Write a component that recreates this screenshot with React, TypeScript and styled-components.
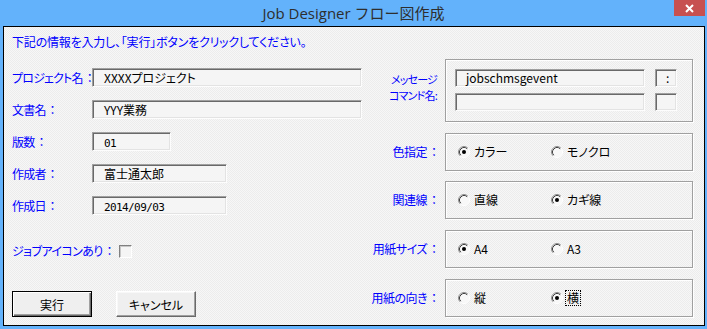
import React from "react";
import styled, { createGlobalStyle } from "styled-components";

const GlobalStyle = createGlobalStyle`
  html, body {
    margin: 0;
    padding: 0;
    background: #63b2fb;
  }
  * {
    box-sizing: border-box;
  }
`;

const UI_FONT = `"Noto Sans CJK JP", "Liberation Sans", sans-serif`;

const Window = styled.div`
  width: 707px;
  height: 329px;
  display: flex;
  flex-direction: column;
  background: #63b2fb;
  font-family: ${UI_FONT};
  font-size: 12px;
  font-feature-settings: "palt";
`;

const TitleBar = styled.div`
  position: relative;
  height: 26px;
  display: flex;
  align-items: center;
  justify-content: center;
  padding-bottom: 2px;
  color: #2e2e2e;
  font-family: "Open Sans", "Noto Sans CJK JP", sans-serif;
  font-size: 15px;
  font-feature-settings: normal;
`;

const CloseButton = styled.div`
  position: absolute;
  top: 0;
  right: 2px;
  width: 31px;
  height: 16px;
  background: #c75050;
  display: flex;
  align-items: center;
  justify-content: center;
`;

const Body = styled.div`
  flex: 1;
  margin: 0 2px 3px 3px;
  border: 1px solid #000;
  padding: 8px 11px 0 8px;
  background: repeating-conic-gradient(#ececec 0% 25%, #f7f7f7 0% 50%) 0 0 / 2px 2px;
`;

const Instruction = styled.div`
  color: #0000ff;
  line-height: 14px;
  height: 14px;
  letter-spacing: -0.2px;
`;

const Main = styled.div`
  display: flex;
  justify-content: space-between;
`;

const LeftColumn = styled.div`
  width: 354px;
  padding-top: 19px;
  display: flex;
  flex-direction: column;
`;

const Fields = styled.div`
  display: flex;
  flex-direction: column;
  gap: 13px;
`;

const FormRow = styled.div`
  display: flex;
  align-items: center;
`;

const Label = styled.div`
  width: 80px;
  color: #0000ff;
  line-height: 19px;
  white-space: nowrap;
  letter-spacing: -0.8px;
`;

const Colon = styled.span`
  margin-left: 4px;
  letter-spacing: 0;
`;

const Field = styled.div<{ $w: number }>`
  width: ${(p) => p.$w}px;
  height: 19px;
  background: #f5f5f5;
  border-top: 1px solid #a0a0a0;
  border-left: 1px solid #a0a0a0;
  border-bottom: 1px solid #fdfdfd;
  border-right: 1px solid #fdfdfd;
  box-shadow: inset 1px 1px #696969, inset -1px -1px #e3e3e3;
  padding-left: 11px;
  line-height: 17px;
  color: #000;
  white-space: nowrap;
  overflow: hidden;
`;

const Digits = styled.span`
  font-family: "DejaVu Sans Mono", "Liberation Mono", monospace;
  font-size: 11px;
  letter-spacing: -0.6px;
`;

const CheckRow = styled.div`
  margin-top: 29px;
  display: flex;
  align-items: center;
  gap: 6px;
`;

const CheckLabel = styled.span`
  color: #0000ff;
  letter-spacing: -0.6px;
  line-height: 14px;
`;

const CheckBox = styled.div`
  width: 13px;
  height: 13px;
  background: #f5f5f5;
  border-top: 1px solid #808080;
  border-left: 1px solid #808080;
  border-bottom: 1px solid #fff;
  border-right: 1px solid #fff;
  box-shadow: inset 1px 1px #c8c8c8;
`;

const ButtonRow = styled.div`
  margin-top: 33px;
  display: flex;
  gap: 24px;
`;

const Button = styled.div<{ $default?: boolean }>`
  width: 80px;
  height: 26px;
  display: flex;
  align-items: center;
  justify-content: center;
  background: #efefef;
  color: #000;
  font-size: 12px;
  border: 1px solid ${(p) => (p.$default ? "#000" : "#fff")};
  border-right-color: ${(p) => (p.$default ? "#000" : "#696969")};
  border-bottom-color: ${(p) => (p.$default ? "#000" : "#696969")};
  box-shadow: ${(p) =>
    p.$default
      ? "inset 1px 1px #fff, inset -1px -1px #696969, inset -2px -2px #a0a0a0"
      : "inset -1px -1px #a0a0a0, inset 1px 1px #f8f8f8"};
`;

const RightColumn = styled.div`
  padding-top: 10px;
  display: grid;
  grid-template-columns: 66px 248px;
  column-gap: 8px;
  row-gap: 10px;
  align-items: center;
`;

const SideLabel = styled.div<{ $small?: boolean }>`
  color: #0000ff;
  text-align: right;
  white-space: nowrap;
  font-size: ${(p) => (p.$small ? "11px" : "12px")};
  line-height: ${(p) => (p.$small ? "16px" : "14px")};
  letter-spacing: ${(p) => (p.$small ? "-0.8px" : "-0.5px")};
  align-self: ${(p) => (p.$small ? "start" : "center")};
  padding-top: ${(p) => (p.$small ? "12px" : "0")};
`;

const Group = styled.div<{ $tall?: boolean }>`
  height: ${(p) => (p.$tall ? "63px" : "38px")};
  border: 1px solid #a0a0a0;
  box-shadow: inset 1px 1px #fff, 1px 1px #fff;
  display: flex;
  flex-direction: ${(p) => (p.$tall ? "column" : "row")};
  align-items: ${(p) => (p.$tall ? "stretch" : "center")};
  gap: 6px;
  padding: ${(p) => (p.$tall ? "9px 0 0 9px" : "0 0 0 12px")};
`;

const CommandRow = styled.div`
  display: flex;
  gap: 10px;
`;

const SmallField = styled(Field)`
  height: 18px;
  padding-left: 10px;
  line-height: 16px;
`;

const Option = styled.div`
  width: 87px;
  display: flex;
  align-items: center;
  gap: 2px;
  color: #000;
  line-height: 14px;
`;

const OptionText = styled.span<{ $focus?: boolean }>`
  padding: 0 1px;
  border: 1px dotted ${(p) => (p.$focus ? "#000" : "transparent")};
`;

const Radio = ({ checked }: { checked?: boolean }) => (
  <svg width="12" height="12" viewBox="0 0 12 12">
    <circle cx="6" cy="6" r="5" fill="#f8f8f8" />
    <path d="M2.11 9.89 A5.5 5.5 0 0 1 9.89 2.11" fill="none" stroke="#909090" strokeWidth="1" />
    <path d="M9.89 2.11 A5.5 5.5 0 0 1 2.11 9.89" fill="none" stroke="#ffffff" strokeWidth="1" />
    <path d="M2.82 9.18 A4.5 4.5 0 0 1 9.18 2.82" fill="none" stroke="#404040" strokeWidth="1" />
    {checked && <circle cx="6" cy="6" r="2" fill="#000" />}
  </svg>
);

type Choice = { text: string; checked?: boolean; focus?: boolean };

const RadioGroup = ({ options }: { options: Choice[] }) => (
  <Group>
    {options.map((o) => (
      <Option key={o.text}>
        <Radio checked={o.checked} />
        <OptionText $focus={o.focus}>{o.text}</OptionText>
      </Option>
    ))}
  </Group>
);

const FieldLabel = ({ text }: { text: string }) => (
  <Label>
    {text}
    <Colon>：</Colon>
  </Label>
);

const App = () => {
  return (
    <>
      <GlobalStyle />
      <Window>
        <TitleBar>
          Job Designer フロー図作成
          <CloseButton>
            <svg width="9" height="9" viewBox="0 0 9 9">
              <path d="M1 1 L8 8 M8 1 L1 8" stroke="#fff" strokeWidth="2" />
            </svg>
          </CloseButton>
        </TitleBar>
        <Body>
          <Instruction>下記の情報を入力し、「実行」ボタンをクリックしてください。</Instruction>
          <Main>
            <LeftColumn>
              <Fields>
                <FormRow>
                  <FieldLabel text="プロジェクト名" />
                  <Field $w={270}>XXXXプロジェクト</Field>
                </FormRow>
                <FormRow>
                  <FieldLabel text="文書名" />
                  <Field $w={270}>YYY業務</Field>
                </FormRow>
                <FormRow>
                  <FieldLabel text="版数" />
                  <Field $w={79}>
                    <Digits>01</Digits>
                  </Field>
                </FormRow>
                <FormRow>
                  <FieldLabel text="作成者" />
                  <Field $w={135}>富士通太郎</Field>
                </FormRow>
                <FormRow>
                  <FieldLabel text="作成日" />
                  <Field $w={135}>
                    <Digits>2014/09/03</Digits>
                  </Field>
                </FormRow>
              </Fields>
              <CheckRow>
                <CheckLabel>
                  ジョブアイコンあり<Colon>：</Colon>
                </CheckLabel>
                <CheckBox />
              </CheckRow>
              <ButtonRow>
                <Button $default>実行</Button>
                <Button>キャンセル</Button>
              </ButtonRow>
            </LeftColumn>
            <RightColumn>
              <SideLabel $small>
                メッセージ
                <br />
                コマンド名:
              </SideLabel>
              <Group $tall>
                <CommandRow>
                  <SmallField $w={190}>jobschmsgevent</SmallField>
                  <SmallField $w={22}>:</SmallField>
                </CommandRow>
                <CommandRow>
                  <SmallField $w={190} />
                  <SmallField $w={22} />
                </CommandRow>
              </Group>
              <SideLabel>
                色指定<Colon>：</Colon>
              </SideLabel>
              <RadioGroup options={[{ text: "カラー", checked: true }, { text: "モノクロ" }]} />
              <SideLabel>
                関連線<Colon>：</Colon>
              </SideLabel>
              <RadioGroup options={[{ text: "直線" }, { text: "カギ線", checked: true }]} />
              <SideLabel>
                用紙サイズ<Colon>：</Colon>
              </SideLabel>
              <RadioGroup options={[{ text: "A4", checked: true }, { text: "A3" }]} />
              <SideLabel>
                用紙の向き<Colon>：</Colon>
              </SideLabel>
              <RadioGroup options={[{ text: "縦" }, { text: "横", checked: true, focus: true }]} />
            </RightColumn>
          </Main>
        </Body>
      </Window>
    </>
  );
};

export default App;
